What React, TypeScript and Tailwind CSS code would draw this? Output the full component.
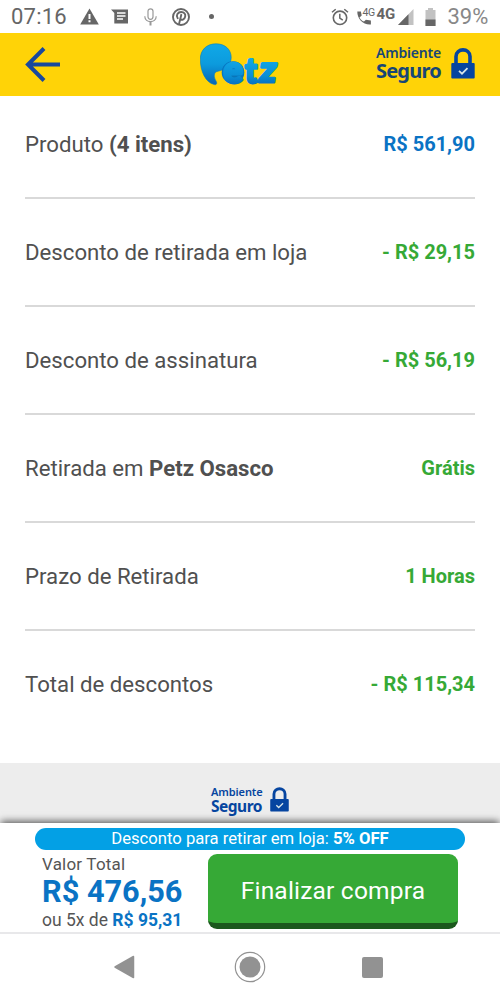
const rows = [
  { label: "Produto ", strong: "(4 itens)", value: "R$ 561,90", color: "text-[#0a73c4]" },
  { label: "Desconto de retirada em loja", strong: "", value: "- R$ 29,15", color: "text-[#36a936]" },
  { label: "Desconto de assinatura", strong: "", value: "- R$ 56,19", color: "text-[#36a936]" },
  { label: "Retirada em ", strong: "Petz Osasco", value: "Grátis", color: "text-[#36a936]" },
  { label: "Prazo de Retirada", strong: "", value: "1 Horas", color: "text-[#36a936]" },
  { label: "Total de descontos", strong: "", value: "- R$ 115,34", color: "text-[#36a936]" },
];

function StatusBar() {
  return (
    <div className="flex h-[33px] shrink-0 items-center bg-white pl-[11px] text-[#666]">
      <span className="w-[57px] whitespace-nowrap text-[22px] leading-[33px] tracking-[0.2px]">07:16</span>
      <svg className="ml-3 h-[17px] w-[19px] shrink-0" viewBox="0 0 19 17">
        <path d="M9.5 0.5 18.8 16.5H0.2Z" fill="#666" />
        <path d="M8.5 6h2v5h-2zM8.5 12.3h2v2h-2z" fill="#fff" />
      </svg>
      <svg className="ml-3 h-[15px] w-[18px] shrink-0" viewBox="0 0 18 15">
        <path d="M0 0.5H17V14.5H3.3V4Z" fill="#666" />
        <path d="M6 4h8.5M6 7h8.5M6 10h6" stroke="#fff" strokeWidth="1.3" />
      </svg>
      <svg className="ml-[15px] h-[18px] w-[13px] shrink-0" viewBox="0 0 13 18" fill="none" stroke="#999">
        <rect x="4" y="0.8" width="5" height="10.5" rx="2.5" strokeWidth="1.2" />
        <path d="M0.8 8.3C0.8 15.5 12.2 15.5 12.2 8.3" strokeWidth="1.2" />
        <path d="M6.5 13.5V17.5" strokeWidth="2" />
      </svg>
      <svg className="ml-[15px] h-[18px] w-[18px] shrink-0" viewBox="0 0 18 18" fill="none" stroke="#666">
        <circle cx="9" cy="9" r="8" strokeWidth="1.9" />
        <path d="M5.7 10.2C3.6 7.2 5.8 4 9.2 4c3 0 4.5 2.1 4 4.5-.6 3.2-3.7 4.2-4.8 2.3M9.3 6.8 7.1 15.7" strokeWidth="1.9" strokeLinecap="round" />
      </svg>
      <span className="ml-[18.5px] h-[5px] w-[5px] shrink-0 rounded-full bg-[#666]" />
      <svg className="ml-[117px] h-[18px] w-[18px] shrink-0" viewBox="0 0 18 18" fill="none" stroke="#666">
        <circle cx="9" cy="9.8" r="6.7" strokeWidth="1.6" />
        <path d="M8.8 5.8v4.4l3 2M1 4.3 4.7 1.2M17 4.3l-3.7-3.1" strokeWidth="1.5" />
      </svg>
      <div className="relative ml-[8px] h-[18px] w-[20px] shrink-0">
        <svg className="h-[18px] w-[15px]" viewBox="0 0 15 18">
          <path d="M.3 3.5h3.6l.8 4-2.2 1.9c1.2 2.2 2.4 3.3 4.5 4.2l1.9-1.9 5 .8v4C6.5 17.3.1 11 .3 3.5Z" fill="#666" />
        </svg>
        <span className="absolute left-[6px] top-[-1px] text-[10.5px] leading-[12px] tracking-[-0.5px]">4G</span>
      </div>
      <span className="w-[21px] pb-[6px] text-[15px] font-bold leading-4 tracking-[-0.2px]">4G</span>
      <svg className="h-[16px] w-[16px] shrink-0" viewBox="0 0 16 16">
        <path d="M0 16 15.5 0V16Z" fill="#c2c2c2" />
        <path d="M0 16 10.5 5.2V16Z" fill="#666" />
      </svg>
      <svg className="ml-[11px] h-[18px] w-[11px] shrink-0" viewBox="0 0 11 18">
        <path d="M3 0h5v2h2.5v16H.5V2H3Z" fill="#c2c2c2" />
        <path d="M.5 11.5h10V18H.5Z" fill="#666" />
      </svg>
      <span className="ml-[12px] whitespace-nowrap text-[22px] leading-[33px] text-[#888]">39%</span>
    </div>
  );
}

function Lock({ className }: { className: string }) {
  return (
    <svg className={className} viewBox="0 0 24 31">
      <path d="M5 16V8.5C5 -.3 19 -.3 19 8.5V16" fill="none" stroke="#0645a0" strokeWidth="3.6" />
      <rect x="0.3" y="15" width="23.4" height="15.6" rx="1" fill="#0645a0" />
      <path d="m8 22.8 3 2.9 5.5-5.5" fill="none" stroke="#d9e6e8" strokeWidth="1.7" />
    </svg>
  );
}

function PetzLogo() {
  return (
    <svg className="h-[60px] w-[90px]" viewBox="0 -8 90 60" role="img" aria-label="Petz">
      <defs>
        <linearGradient id="bubble" x1="0" y1="0" x2="0" y2="42" gradientUnits="userSpaceOnUse">
          <stop offset="0" stopColor="#10a9e8" />
          <stop offset="0.5" stopColor="#0c9bdd" />
          <stop offset="1" stopColor="#0763b4" />
        </linearGradient>
        <linearGradient id="letters" x1="0" y1="16" x2="0" y2="44" gradientUnits="userSpaceOnUse">
          <stop offset="0" stopColor="#12a7e6" />
          <stop offset="0.6" stopColor="#0a8fd6" />
          <stop offset="1" stopColor="#0767b7" />
        </linearGradient>
      </defs>
      <path
        d="M16 .8C25.5.8 31.3 7 31.2 14.5 31.1 22 25.5 27 18 28.2 13.2 29 13.5 34 16.3 38.500 17.5 40.7 16.3 42 14.3 41.6 5.5 39.5.5 28.5.3 16.5.2 7 6.5.8 16 .8Z"
        fill="url(#bubble)"
        stroke="#077dbb"
        strokeWidth="0.6"
      />
      <circle cx="33" cy="29.5" r="11.300" fill="#0875b9" />
      <g
        fill="url(#letters)"
        stroke="url(#letters)"
        strokeWidth="3"
        strokeLinejoin="round"
        fontFamily="Lato, sans-serif"
        fontWeight="900"
      >
        <text x="23.5" y="39.5" fontSize="38" textLength="19.5" lengthAdjust="spacingAndGlyphs">e</text>
        <text x="45" y="39.5" fontSize="35" textLength="12" lengthAdjust="spacingAndGlyphs">t</text>
        <text x="63.5" y="39.5" fontSize="36" textLength="17" lengthAdjust="spacingAndGlyphs" transform="skewX(-8)">z</text>
      </g>
    </svg>
  );
}

function Header() {
  return (
    <header className="flex h-[63px] shrink-0 items-center bg-[#ffd307] pl-[25px]">
      <svg className="h-[36px] w-[36px]" viewBox="0 0 36 36" fill="none" stroke="#19489e" strokeWidth="4">
        <path d="M35 17.5H3.5M19 1.5 3 17.5l16 16" />
      </svg>
      <div className="ml-[139px]">
        <PetzLogo />
      </div>
      <div className="ml-[86px] w-[67px] whitespace-nowrap pb-[5px] font-['Noto_Sans'] text-[#174676]">
        <div className="text-[14px] font-semibold leading-[18px] tracking-[-0.2px]">Ambiente</div>
        <div className="text-[20px] font-bold leading-[18px] tracking-[-0.8px]">Seguro</div>
      </div>
      <Lock className="mb-[3px] ml-[8px] h-[31px] w-[24px]" />
    </header>
  );
}

function BottomBar() {
  return (
    <div className="relative h-[111px] shrink-0 border-b-2 border-[#e8e8ea] bg-white pt-[5px] shadow-[0_-3px_7px_-1px_rgba(0,0,0,0.6)]">
      <div className="mx-[35px] h-[22px] rounded-full bg-[#03a0e5] text-center text-[16.65px] leading-[22px] text-white">
        Desconto para retirar em loja: <b>5% OFF</b>
      </div>
      <div className="flex">
        <div className="ml-[42px] w-[166px] whitespace-nowrap text-[#555]">
          <div className="mt-1 text-[17px] leading-[21px] tracking-[0.2px]">Valor Total</div>
          <div className="text-[30.7px] font-bold leading-[34px] text-[#0a73c4]">R$ 476,56</div>
          <div className="text-[17.5px] leading-[23px]">
            ou 5x de <b className="text-[#0a73c4]">R$ 95,31</b>
          </div>
        </div>
        <button className="mt-1 h-[75px] w-[250px] rounded-[9px] border-b-[6px] border-[#1b581d] bg-[#36a936] pt-[6px] text-[24.5px] tracking-[0.2px] text-white">
          Finalizar compra
        </button>
      </div>
    </div>
  );
}

function AndroidNav() {
  return (
    <nav className="relative flex h-[66px] shrink-0 items-center bg-white pl-[114px]">
      <svg className="h-[24px] w-[21px]" viewBox="0 0 21 24">
        <path d="M1 12 19.5 1.5v21Z" fill="#929292" stroke="#929292" strokeWidth="1.5" strokeLinejoin="round" />
      </svg>
      <svg className="ml-[99px] h-[32px] w-[32px]" viewBox="0 0 32 32">
        <circle cx="16" cy="16" r="14.7" fill="none" stroke="#929292" strokeWidth="1.2" />
        <circle cx="16" cy="16" r="10.5" fill="#929292" />
      </svg>
      <span className="ml-[96px] h-[21px] w-[21px] rounded-[2px] bg-[#929292]" />
    </nav>
  );
}

export default function App() {
  return (
    <div className="flex h-[1000px] w-[500px] flex-col overflow-hidden bg-white font-['Roboto',sans-serif]">
      <StatusBar />
      <Header />
      <main className="h-[667px] shrink-0 px-[25px]">
        {rows.map((row) => (
          <div
            key={row.label}
            className="flex items-center justify-between border-b-2 border-[#d9d9d9] pb-[39px] pt-[39px] leading-[28px] first:pt-[34px] last:border-b-0"
          >
            <span className="text-[22.2px] text-[#505050]">
              {row.label}
              <b>{row.strong}</b>
            </span>
            <span className={`text-[20px] font-bold ${row.color}`}>{row.value}</span>
          </div>
        ))}
      </main>
      <div className="flex h-[60px] shrink-0 items-start bg-[#ededed] pl-[211px] pt-[22px]">
        <div className="w-[52px] whitespace-nowrap font-['Noto_Sans'] text-[#0645a0]">
          <div className="text-[11px] font-semibold leading-[14px] tracking-[-0.1px]">Ambiente</div>
          <div className="text-[15.5px] font-bold leading-[14px] tracking-[-0.5px]">Seguro</div>
        </div>
        <Lock className="ml-[7px] mt-[2px] h-[25px] w-[19px]" />
      </div>
      <BottomBar />
      <AndroidNav />
    </div>
  );
}
